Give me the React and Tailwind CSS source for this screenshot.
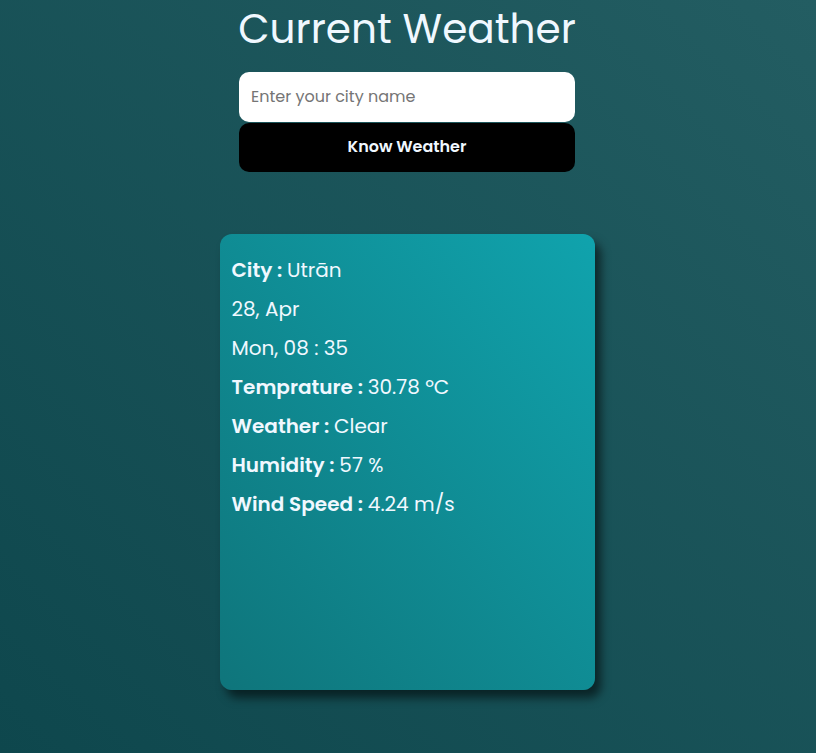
import React from 'react';

const rows = [
    { label: 'City', value: 'Utrān' },
    { value: '28, Apr' },
    { value: 'Mon, 08 : 35' },
    { label: 'Temprature', value: '30.78 ºC' },
    { label: 'Weather', value: 'Clear' },
    { label: 'Humidity', value: '57 %' },
    { label: 'Wind Speed', value: '4.24 m/s' },
];

const App = () => {
    return (
        <div
            className="min-h-[753px] w-full pr-[2px] flex flex-col items-center bg-[linear-gradient(to_top_right,#0e474d,#235d62)] text-white"
            style={{ fontFamily: 'Poppins, "Open Sans", sans-serif' }}
        >
            <h1 className="text-[40.6px] leading-[56px] mt-[1px] text-[#f0f8ff]">Current Weather</h1>
            <div className="w-[336px] mt-[15px] flex flex-col gap-[1px]">
                <input
                    type="text"
                    placeholder="Enter your city name"
                    className="h-[50px] rounded-[10px] bg-white px-3 pb-[1px] text-[16px] text-gray-800 placeholder:text-[#757575] outline-none"
                />
                <button className="h-[49px] rounded-[10px] bg-black pb-[2px] text-[16px] font-semibold text-[#f0f8ff]">
                    Know Weather
                </button>
            </div>
            <div className="mt-[62px] w-[375px] h-[456px] rounded-[12px] bg-[linear-gradient(to_bottom_left,#10a3ad,#0f757b)] shadow-[6px_8px_10px_rgba(0,0,0,0.55)] px-3 pt-[24px]">
                {rows.map((row, idx) => (
                    <p key={idx} className="text-[20px] leading-[24px] mb-[15px] text-[#f0f8ff]">
                        {row.label && <span className="font-semibold">{row.label} : </span>}
                        {row.value}
                    </p>
                ))}
            </div>
        </div>
    );
};

export default App;
